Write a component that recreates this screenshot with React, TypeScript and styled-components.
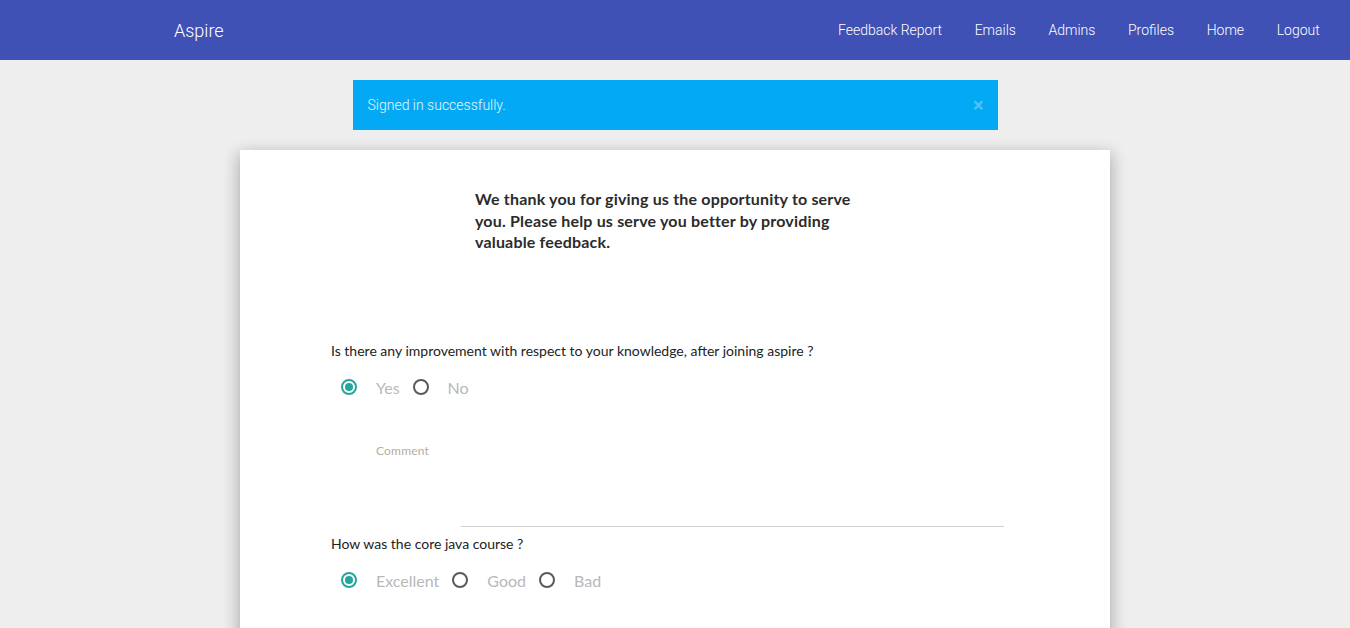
import styled, { createGlobalStyle } from "styled-components";

const GlobalStyle = createGlobalStyle`
    body {
        margin: 0;
        background-color: #eeeeee;
        font-family: Lato, "Noto Sans", sans-serif;
    }
`;

const Nav = styled.nav`
    height: 60px;
    background-color: #3f51b5;
    display: flex;
    align-items: center;
    justify-content: space-between;
    padding: 0 14px 0 174px;
    font-family: Roboto, "Liberation Sans", sans-serif;
    color: white;
`;
const Brand = styled.a`
    font-size: 18px;
    font-weight: 300;
    color: white;
    text-decoration: none;
`;
const NavLinks = styled.ul`
    display: flex;
    list-style: none;
    margin: 0;
    padding: 0;
`;
const NavLink = styled.li`
    padding: 0 16.3px;
    font-size: 14px;
    font-weight: 300;
    line-height: 60px;
    color: white;
`;

const Alert = styled.div`
    width: 645px;
    height: 50px;
    box-sizing: border-box;
    margin: 20px auto;
    background-color: #03a9f4;
    display: flex;
    align-items: center;
    justify-content: space-between;
    padding: 0 14px 0 15px;
    font-family: Roboto, "Liberation Sans", sans-serif;
    font-size: 14px;
    font-weight: 300;
    color: #e8f7fe;
`;
const Close = styled.span`
    color: #4fc3f7;
    font-size: 20px;
    font-weight: 700;
    line-height: 1;
`;

const Card = styled.div`
    width: 870px;
    margin: 0 auto;
    background-color: white;
    box-shadow: 0 8px 17px 2px rgba(0, 0, 0, 0.14), 0 3px 14px 2px rgba(0, 0, 0, 0.12), 0 5px 5px -3px rgba(0, 0, 0, 0.2);
    padding: 38px 0 60px 91px;
    box-sizing: border-box;
    min-height: 520px;
`;
const Intro = styled.p`
    margin: 0 0 0 144px;
    width: 395px;
    font-size: 16px;
    font-weight: 700;
    letter-spacing: 0.18px;
    line-height: 21.5px;
    color: #2b2b2b;
`;
const Question = styled.div<{ $top: number }>`
    margin-top: ${(p) => p.$top}px;
`;
const QuestionText = styled.p`
    margin: 0;
    font-size: 14px;
    line-height: 18px;
    color: #222;
`;
const RadioRow = styled.div`
    display: flex;
    align-items: center;
    margin: 18px 0 0 10px;
    gap: 13px;
`;
const Option = styled.label`
    display: flex;
    align-items: center;
    gap: 19px;
    font-size: 16px;
    color: #b8b8b8;
`;
const Circle = styled.span<{ $checked?: boolean }>`
    width: 16px;
    height: 16px;
    box-sizing: border-box;
    border-radius: 50%;
    border: 2px solid ${(p) => (p.$checked ? "#26a69a" : "#5a5a5a")};
    display: flex;
    align-items: center;
    justify-content: center;
    &::after {
        content: "";
        width: 8px;
        height: 8px;
        border-radius: 50%;
        background-color: #26a69a;
        display: ${(p) => (p.$checked ? "block" : "none")};
    }
`;
const CommentField = styled.div`
    margin: 46px 0 0 45px;
`;
const CommentLabel = styled.div`
    font-size: 12px;
    color: #b5ada0;
    letter-spacing: 0.2px;
`;
const CommentLine = styled.div`
    margin: 68px 0 0 85px;
    width: 543px;
    border-bottom: 1px solid #cfcfcf;
`;

function Radio({ label, checked }: { label: string; checked?: boolean }) {
    return (
        <Option>
            <Circle $checked={checked} />
            {label}
        </Option>
    );
}

export default function App() {
    const links = ["Feedback Report", "Emails", "Admins", "Profiles", "Home", "Logout"];
    return (
        <>
            <GlobalStyle />
            <Nav>
                <Brand>Aspire</Brand>
                <NavLinks>
                    {links.map((l) => (
                        <NavLink key={l}>{l}</NavLink>
                    ))}
                </NavLinks>
            </Nav>
            <Alert>
                Signed in successfully.
                <Close>×</Close>
            </Alert>
            <Card>
                <Intro>
                    We thank you for giving us the opportunity to serve you. Please help us serve you better by providing valuable feedback.
                </Intro>
                <Question $top={89}>
                    <QuestionText>Is there any improvement with respect to your knowledge, after joining aspire ?</QuestionText>
                    <RadioRow>
                        <Radio label="Yes" checked />
                        <Radio label="No" />
                    </RadioRow>
                    <CommentField>
                        <CommentLabel>Comment</CommentLabel>
                        <CommentLine />
                    </CommentField>
                </Question>
                <Question $top={8}>
                    <QuestionText>How was the core java course ?</QuestionText>
                    <RadioRow>
                        <Radio label="Excellent" checked />
                        <Radio label="Good" />
                        <Radio label="Bad" />
                    </RadioRow>
                </Question>
            </Card>
        </>
    );
}
